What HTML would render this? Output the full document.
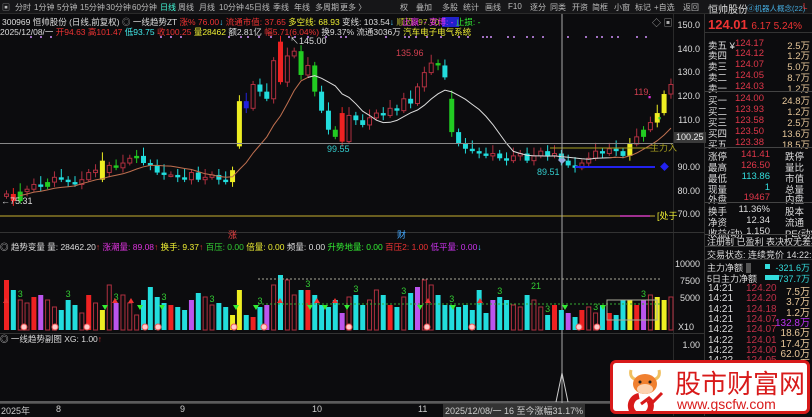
<!DOCTYPE html>
<html><head><meta charset="utf-8">
<style>
*{margin:0;padding:0;box-sizing:border-box}
body{width:812px;height:416px;background:#0c0c0e;overflow:hidden;position:relative;font-family:"Liberation Sans","Noto Sans CJK SC",sans-serif;font-size:9px;color:#ccc}
.a{position:absolute;white-space:nowrap}
#tb{position:absolute;left:0;top:0;width:812px;height:14px;background:#161618;border-bottom:1px solid #2a2a2a}
#tb span{position:absolute;top:2px;font-size:8px;color:#bbb}
.ax{position:absolute;right:112px;font-size:9px;color:#ddd;text-align:right}
</style></head><body>
<div id="tb">
<span style="left:2px">▣</span><span style="left:15px">分时</span><span style="left:34px">1分钟</span><span style="left:57px">5分钟</span><span style="left:80px">15分钟</span><span style="left:106px">30分钟</span><span style="left:132px">60分钟</span><span style="left:160px;color:#4fd">日线</span><span style="left:178px">周线</span><span style="left:199px">月线</span><span style="left:219px">10分钟</span><span style="left:245px">45日线</span><span style="left:273px">季线</span><span style="left:294px">年线</span><span style="left:315px">多周期</span><span style="left:340px">更多 〉</span>
<span style="left:400px">权</span><span style="left:416px">叠加</span><span style="left:442px">多股</span><span style="left:463px">统计</span><span style="left:485px">画线</span><span style="left:508px">F10</span><span style="left:530px">逐分</span><span style="left:550px">同类</span><span style="left:572px">开资</span><span style="left:592px">简框</span><span style="left:614px">小窗</span><span style="left:635px">标记</span><span style="left:654px">+自选</span><span style="left:683px">返回</span>
<span style="left:708px;color:#ddd;font-size:10px;top:1px">恒帅股份</span><span style="left:747px;color:#4ad;font-size:7.5px;top:3px">ⓓ机器人概念(22)</span><span style="left:803px;color:#e33">L</span>
</div>
<div class="a" style="left:2px;top:16px;color:#ddd;font-size:8.5px">300969 恒帅股份 (日线,前复权) <span style="color:#aaa">◎</span> 一线趋势ZT <span style="color:#e33">涨% 76.00</span><span style="color:#4cf">↓</span> <span style="color:#e33">流通市值: 37.65</span> <span style="color:#ee3">多空线: 68.93</span> 变线: 103.54<span style="color:#4cf">↓</span> <span style="color:#bb3">顺恐: 97.70</span> <span style="background:#22c;color:#22c">顺恐</span></div>
<div class="a" style="left:402px;top:16px;font-size:8.5px"><span style="color:#e3e">止赢: -</span> <span style="color:#e3e">变博: -</span> <span style="color:#3e3">止损: -</span></div>
<div class="a" style="left:0;top:26px;color:#ddd;font-size:8.5px">2025/12/08/一 <span style="color:#e33">开94.63 高101.47</span> <span style="color:#4ee">低93.75</span> <span style="color:#e33">收100.25</span> <span style="color:#ee3">量28462</span> 额2.81亿 <span style="color:#e33">幅5.71(6.04%)</span> 换9.37% 流通3036万 <span style="color:#ee3">汽车电子电气系统</span></div>
<div class="a" style="left:652px;top:16px;color:#aaa">◇ ▣</div>
<div class="a" style="left:673px;top:14px;width:1px;height:402px;background:#2a2a2a"></div>
<div class="a" style="left:704px;top:14px;width:1px;height:402px;background:#333"></div>
<div class="a" style="left:0;top:232px;width:704px;height:1px;background:#333"></div>
<div class="a" style="left:0;top:333px;width:704px;height:1px;background:#333"></div>
<div class="a" style="left:0;top:403px;width:704px;height:1px;background:#444"></div>
<svg class="a" style="left:0;top:0" width="704" height="416" id="sv"></svg>
<div class="ax" style="top:20px">150.0</div><div class="ax" style="top:44px">140.0</div><div class="ax" style="top:67px">130.0</div><div class="ax" style="top:91px">120.0</div><div class="ax" style="top:115px">110.0</div><div class="ax" style="top:162px">90.00</div><div class="ax" style="top:186px">80.00</div><div class="ax" style="top:209px">70.00</div>
<div class="a" style="left:674px;top:132px;width:32px;height:11px;background:#3a3a3a;color:#eee;font-size:9px;padding-left:2px">100.25</div>
<div class="ax" style="top:259px">10000</div><div class="ax" style="top:276px">7500</div><div class="ax" style="top:293px">5000</div><div class="ax" style="top:322px;right:118px">X10</div><div class="ax" style="top:340px">1.00</div>
<div class="a" style="left:0;top:241px;color:#ddd;font-size:8.5px">◎ 趋势变量 量: 28462.20<span style="color:#e33">↑</span> <span style="color:#d3d">涨潮量: 89.08</span><span style="color:#e33">↑</span> <span style="color:#ee3">换手: 9.37</span><span style="color:#e33">↑</span> <span style="color:#3c3">百压: 0.00</span> <span style="color:#ee3">倍量: 0.00</span> 频量: 0.00 <span style="color:#3e3">升势地量: 0.00</span> <span style="color:#e33">百压2: 1.00</span> <span style="color:#c3e">低平量: 0.00</span><span style="color:#4cf">↓</span></div>
<div class="a" style="left:0;top:333px;color:#ddd;font-size:8.5px">◎ 一线趋势副图 XG: 1.00<span style="color:#e33">↑</span></div>
<div class="a" style="left:1px;top:404px;color:#ccc">2025年</div><div class="a" style="left:56px;top:404px">8</div><div class="a" style="left:180px;top:404px">9</div><div class="a" style="left:312px;top:404px">10</div><div class="a" style="left:418px;top:404px">11</div>
<div class="a" style="left:443px;top:404px;background:#333;color:#ccc;padding:0 2px">2025/12/08/一 16 至今涨幅31.17%</div>
<div class="a" style="left:708px;top:17px;font-size:13px;color:#e33;font-weight:bold">124.01 <span style="font-size:10px;font-weight:normal">6.17 5.24%</span></div>
<div class="a" style="left:705px;top:32px;width:107px;height:1px;background:#333"></div>
<div id="rows"></div>
<div class="a" style="left:610px;top:360px;width:200px;height:54px;background:#fff;border:3px solid #d81a1a;border-radius:6px">
<svg class="a" style="left:12px;top:3px" width="40" height="46" viewBox="0 0 40 46">
<path d="M6 4 Q4 12 12 14 M34 4 Q36 12 28 14" stroke="#f0c060" stroke-width="3" fill="none"/>
<ellipse cx="20" cy="18" rx="12" ry="10" fill="#f08030"/>
<ellipse cx="20" cy="23" rx="8" ry="5" fill="#fcd2b0"/>
<circle cx="15" cy="16" r="1.5" fill="#222"/><circle cx="25" cy="16" r="1.5" fill="#222"/>
<path d="M24 34 A10 10 0 1 1 14 30" stroke="#d81a1a" stroke-width="6" fill="none"/>
<path d="M16 38 L24 32 L28 36 L37 27" stroke="#d81a1a" stroke-width="3" fill="none"/>
</svg>
<div class="a" style="left:62px;top:1px;font-size:26px;color:#d81a1a;font-family:'Noto Sans CJK SC',sans-serif">股市财富网</div>
<div class="a" style="left:64px;top:33px;font-size:14px;color:#d81a1a">www.gscfw.com</div>
</div>
<script>
var rows=[
[38,'卖五 ¥','124.17','2.5万'],[48,'卖四','124.12','1.2万'],[59,'卖三','124.07','5.0万'],[70,'卖二','124.05','8.7万'],[81,'卖一','124.03','1.2万'],
[93,'买一','124.00','24.8万'],[104,'买二','123.93','1.2万'],[115,'买三','123.58','2.5万'],[126,'买四','123.50','13.6万'],[137,'买五','123.38','18.5万'],
[149,'涨停','141.41','跌停'],[160,'最高','126.50','量比'],[171,'最低','113.86','市值'],[182,'现量','1','总量'],[192,'外盘','19467','内盘'],
[204,'换手','11.36%','股本'],[215,'净资','12.34','流通'],[226,'收益(动)','1.150','PE(动)']];
var h='';
rows.forEach(function(r,i){var mc='#e0374a',rc='#e8c89a';
 if(r[1]=='最低'||r[1]=='现量')mc='#3dd';if(i>=10)rc='#ddd';if(i>=15)mc='#ddd';
 h+='<div class="a" style="left:708px;top:'+r[0]+'px;color:#ddd;font-size:9.5px">'+r[1]+'</div><div class="a" style="right:'+(i>=10?42:48)+'px;top:'+r[0]+'px;color:'+mc+';font-size:9.5px">'+r[2]+'</div><div class="a" style="'+(i>=10?'left:785px':'right:2px')+';top:'+r[0]+'px;color:'+rc+';font-size:9.5px">'+r[3]+'</div>';});
[91,147,202,234].forEach(function(y){h+='<div class="a" style="left:705px;top:'+y+'px;width:107px;height:1px;background:#444"></div>'});
h+='<div class="a" style="left:707px;top:235px;color:#ddd;font-size:9px">注册制 已盈利 表决权无差异</div><div class="a" style="left:705px;top:246px;width:107px;height:1px;background:#333"></div>';
h+='<div class="a" style="left:707px;top:248px;color:#ddd;font-size:9px">交易状态: 连续竞价 14:22:54</div><div class="a" style="left:705px;top:259px;width:107px;height:1px;background:#333"></div>';
h+='<div class="a" style="left:707px;top:261px;color:#ddd;font-size:9px">主力净额 <span style="background:#555">&nbsp;&nbsp;</span></div><div class="a" style="left:765px;top:264px;width:5px;height:5px;background:#3dd"></div><div class="a" style="right:2px;top:261px;color:#3dd;font-size:9px">-321.6万</div>';
h+='<div class="a" style="left:707px;top:272px;color:#ddd;font-size:9px">5日主力净额</div><div class="a" style="left:765px;top:275px;width:14px;height:5px;background:#3dd"></div><div class="a" style="right:2px;top:272px;color:#3dd;font-size:9px">-737.7万</div>';
var tk=[['14:21','124.20','7.5万'],['14:21','124.20','3.7万'],['14:21','124.18','1.2万'],['14:21','124.07','132.8万'],['14:22','124.07','18.6万'],['14:22','124.01','17.4万'],['14:22','124.00','62.0万'],['14:22','124.05','2.5万']];
tk.forEach(function(t,i){var y=283+i*10.3;h+='<div class="a" style="left:708px;top:'+y+'px;color:#ddd;font-size:10px">'+t[0]+'</div><div class="a" style="left:746px;top:'+y+'px;color:#c03048;font-size:10px">'+t[1]+'</div><div class="a" style="right:2px;top:'+y+'px;color:'+(i==3?'#b3e':'#e8c89a')+';font-size:10px">'+t[2]+'</div>'});
document.getElementById('rows').innerHTML=h;

var C=[79,76,80,81,83,82,84,86,85,84,83,85,88,89,88,91,90,92,94,95,92,91,88,87,87,86,85,88,85,86,87,85,84,89,118,115,125,122,119,135,126,137,139,129,133,122,114,106,103,101,112,110,108,111,113,112,115,114,119,117,124,130,134,133,128,105,100,98,97,96,95,96,94,93,95,96,93,95,97,95,96,93,91,90,92,94,97,96,98,97,95,100,103,106,109,113,121,125];
var Y=function(p){return 144-(p-100)*2.38};
var s='';var dx=6.85;
var col={};col[2]=col[6]=col[16]='#2c2';col[19]='#2c2';col[33]='#ee2';col[34]='#ee2';col[35]='#22d';col[40]='#e22';col[43]='#2c2';col[45]='#2c2';col[49]='#e22';col[48]='#2c2';col[63]='#2c2';col[65]='#2c2';col[1]='#e22';col[96]='#ee2';col[95]='#ee2';col[93]='#2c2';col[91]='#ee2';col[14]='#ee2';
var op={34:99,40:143,49:113,65:119};
for(var i=0;i<C.length;i++){
 var x=4+i*dx,c=C[i],o=(op[i]!==undefined)?op[i]:(i?C[i-1]:78);
 if(i==14){o=85;c=93}
 var hi=Math.max(o,c)+1.5+(i%3),lo=Math.min(o,c)-1-(i%2);
 var k=col[i]||(c>=o?'hol':'#2dd');
 var yt=Y(Math.max(o,c)),yb=Y(Math.min(o,c));if(yb-yt<1.5)yb=yt+1.5;
 var lc=k=='hol'?'#b03040':k;
 s+='<line x1="'+(x+2.5)+'" x2="'+(x+2.5)+'" y1="'+Y(hi)+'" y2="'+Y(lo)+'" stroke="'+lc+'"/>';
 if(k=='hol')s+='<rect x="'+(x+0.5)+'" y="'+yt+'" width="4" height="'+(yb-yt)+'" fill="#0c0c0e" stroke="#b03040"/>';
 else s+='<rect x="'+x+'" y="'+yt+'" width="5" height="'+(yb-yt)+'" fill="'+k+'"/>';
}
var ma=[];for(var i=0;i<C.length;i++){var a=0,n=0;for(var j=Math.max(0,i-9);j<=i;j++){a+=C[j];n++}ma.push(a/n)}
var p1='',p2='',p3='';for(var i=2;i<C.length;i++){var pt=(6.5+i*dx)+','+Y(ma[i]).toFixed(1)+' ';if(i<=45)p1+=pt;if(i>=44&&i<=89)p2+=pt;if(i>=88)p3+=pt;}
s+='<polyline points="'+p1+'" fill="none" stroke="#c07050"/>';
s+='<polyline points="'+p2+'" fill="none" stroke="#ddd"/>';
s+='<polyline points="'+p3+'" fill="none" stroke="#c07050"/>';
s+='<line x1="0" x2="673" y1="143.5" y2="143.5" stroke="#888"/>';
s+='<line x1="0" x2="655" y1="216" y2="216" stroke="#c8b030"/><line x1="620" x2="650" y1="216" y2="216" stroke="#a03090" stroke-width="2"/>';
s+='<line x1="550" x2="652" y1="148" y2="148" stroke="#a8a020"/><line x1="575" x2="655" y1="167" y2="167" stroke="#22e" stroke-width="2"/>';
s+='<line x1="562" x2="562" y1="14" y2="403" stroke="#aaa"/>';
s+='<path d="M558 160 l4 4 l4 -4 l-2 -2 l-2 1 l-2 -1z" fill="#9ad"/>';
s+='<line x1="0" x2="673" y1="402" y2="402" stroke="#aaa"/><polyline points="556,402 562,373 568,402" fill="none" stroke="#ccc"/>';
var T=function(x,y,t,c){s+='<text x="'+x+'" y="'+y+'" fill="'+c+'" font-size="9" font-family="Liberation Sans,Noto Sans CJK SC,sans-serif">'+t+'</text>'};
T(290,44,'↖145.00','#ddd');T(396,56,'135.96','#d04050');T(327,152,'99.55','#3cc');T(537,175,'89.51','#3cc');T(1,204,'←75.31','#ddd');T(634,95,'119.','#d04050');
T(650,151,'主力入','#a8a020');T(660,170,'◆','#22e');T(657,219,'[处于','#ee3');T(648,100,'▪','#d3d');T(658,121,'▪','#3c3');
T(228,238,'涨','#e44');T(397,238,'财','#4af');
[30,40,50,160,170,180,228,240,247,258,270,288,294,307,325,340,345,385,404,408,415,426,440,458,467,482,486,490,507,513,526,532,542,567,585,596,601,611,617,636,645].forEach(function(x){s+='<rect x="'+x+'" y="36" width="2" height="2" fill="#a070c0"/>'});
var V=[45,35,25,22,28,30,25,18,15,25,20,12,30,22,15,40,22,30,22,10,25,38,28,22,20,18,15,25,32,28,20,22,18,10,35,10,8,18,20,40,50,45,30,35,35,30,20,18,25,12,28,30,20,25,35,30,20,18,28,32,38,45,40,30,20,20,18,20,15,35,12,25,28,25,20,18,30,25,18,10,20,15,12,8,15,18,12,20,12,10,25,25,20,25,30,28,25,28];
for(var i=0;i<C.length;i++){var x=4+i*dx,hh=V[i%V.length]*1.0+5;var k=col[i]=='#ee2'?'#ee2':(C[i]>=(i?C[i-1]:0)?(i%4==0?'#e22':'hol'):'#2dd');if(i%11==5)k='#b5e';
 var yt=330-hh;if(k=='hol')s+='<rect x="'+(x+0.5)+'" y="'+yt+'" width="4" height="'+hh+'" fill="none" stroke="#b03040"/>';else s+='<rect x="'+x+'" y="'+yt+'" width="5" height="'+hh+'" fill="'+k+'"/>';
 if(i%7==2)T(x,yt-3,'3','#3c3');}
s+='<line x1="258" x2="660" y1="279" y2="279" stroke="#aa9" stroke-dasharray="2,2"/><line x1="258" x2="660" y1="304" y2="304" stroke="#3a3" stroke-dasharray="2,2"/>';
T(531,289,'21','#3c3');
[24,55,87,145,158,234,264,349,427,472,579,597].forEach(function(x){s+='<circle cx="'+x+'" cy="327" r="3" fill="#fcc" stroke="#e55"/>'});
[6,115,131,280,317,335,428,480].forEach(function(x){s+='<path d="M'+x+' 298 l3 5 h-6z" fill="#e33"/>'});
[105,140,162,236,256,310,325,347,420,453,565,603].forEach(function(x){s+='<path d="M'+x+' 310 l3 -5 h-6z" fill="#3e3"/>'});
s+='<rect x="607" y="300" width="50" height="20" fill="none" stroke="#aa9"/>';
document.getElementById('sv').innerHTML=s;
</script>
</body></html>
